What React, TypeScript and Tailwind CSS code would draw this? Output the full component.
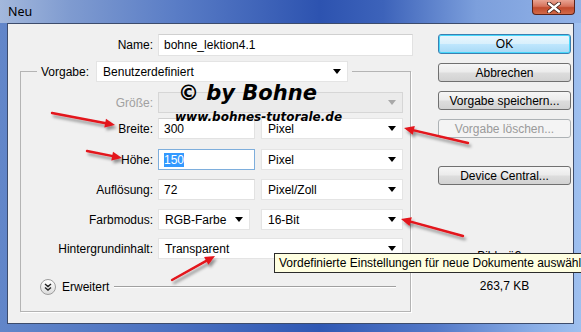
import React from "react";

function Arrow({ x1, y1, x2, y2 }: { x1: number; y1: number; x2: number; y2: number }) {
  const a = Math.atan2(y2 - y1, x2 - x1);
  const len = 11;
  const spread = 0.42;
  const p1 = [x2 - len * Math.cos(a - spread), y2 - len * Math.sin(a - spread)];
  const p2 = [x2 - len * Math.cos(a + spread), y2 - len * Math.sin(a + spread)];
  const bx = x2 - (len - 3) * Math.cos(a);
  const by = y2 - (len - 3) * Math.sin(a);
  return (
    <g filter="url(#shadow)">
      <line x1={x1} y1={y1} x2={bx} y2={by} stroke="#e3141b" strokeWidth={2.4} strokeLinecap="round" />
      <polygon points={`${x2},${y2} ${p1[0]},${p1[1]} ${p2[0]},${p2[1]}`} fill="#e3141b" />
    </g>
  );
}

function Caret({ disabled }: { disabled?: boolean }) {
  return (
    <svg width="8" height="5" viewBox="0 0 8 5" className="ml-auto mr-[6px]">
      <polygon points="0,0 8,0 4,5" fill={disabled ? "#a8a8a8" : "#000"} />
    </svg>
  );
}

function Select({ value, className, disabled }: { value: string; className: string; disabled?: boolean }) {
  return (
    <div
      className={`flex items-center h-[21px] pl-[6px] border ${
        disabled ? "bg-[#ebebeb] border-[#d6d6d6]" : "bg-white border-[#e4e4e4]"
      } ${className}`}>
      <span>{value}</span>
      <Caret disabled={disabled} />
    </div>
  );
}

function Input({ value, className, focused }: { value: React.ReactNode; className: string; focused?: boolean }) {
  return (
    <div
      className={`flex items-center h-[21px] pl-[5px] border ${
        focused ? "border-[#7eaedc]" : "border-[#e2e2e2] border-t-[#d0d0d0]"
      } bg-white ${className}`}>
      {value}
    </div>
  );
}

function Button({ label, primary, disabled, className = "" }: { label: string; primary?: boolean; disabled?: boolean; className?: string }) {
  let look = "border-[#707070] bg-[linear-gradient(to_bottom,#f6f6f6_0%,#ebebeb_48%,#dddddd_52%,#d2d2d2_100%)] text-black";
  if (primary) look = "border-[#3c7fb1] bg-[linear-gradient(to_bottom,#eaf6fd_0%,#d9f0fc_48%,#bee6fd_52%,#a7d9f5_100%)] text-black shadow-[inset_0_0_0_1px_#48d8fb]";
  if (disabled) look = "border-[#adb2b5] bg-[#f4f4f4] text-[#9a9a9a]";
  return (
    <div className={`w-[133px] flex items-center justify-center border rounded-[3px] ${look} ${className}`}>
      {label}
    </div>
  );
}

function Row({ label, children, className = "", muted }: { label: string; children: React.ReactNode; className?: string; muted?: boolean }) {
  return (
    <div className={`flex items-center h-[21px] ${className}`}>
      <span className={`w-[132px] text-right ${muted ? "text-[#a0a0a0]" : ""}`}>{label}</span>
      <div className="flex ml-[5px] gap-[6px]">{children}</div>
    </div>
  );
}

export default function App() {
  return (
    <div className="relative w-[581px] h-[332px] overflow-hidden font-['Liberation_Sans',Arial,sans-serif] text-[12px] text-black bg-[linear-gradient(to_right,#6286c9_0%,#4a70c0_30%,#2f58b4_55%,#5479c8_75%,#8aaee6_92%,#9fc0ef_100%)]">
      {/* title bar */}
      <div className="relative h-[23px] flex items-start bg-[linear-gradient(to_right,#a3b8dc_0%,#7f9bd0_12%,#5a7dc6_30%,#2d53b0_55%,#3d63ba_66%,#7c9fdc_82%,#92b3e8_100%)]">
        <span className="ml-[8px] mt-[3px] text-[12.5px] font-['Noto_Sans',sans-serif]">Neu</span>
        <div className="ml-auto mr-[6px] w-[43px] h-[15px] rounded-b-[4px] border border-t-0 border-[#5b231a] flex items-center justify-center bg-[linear-gradient(to_bottom,#e9a493_0%,#d6735c_45%,#c14a2d_55%,#d26a48_100%)]">
          <svg width="14" height="11" viewBox="0 0 14 11">
            <path d="M2 1.5 L12 9.5 M12 1.5 L2 9.5" stroke="#3a1a14" strokeWidth={4} strokeLinecap="round" />
            <path d="M2 1.5 L12 9.5 M12 1.5 L2 9.5" stroke="#fff" strokeWidth={2.4} strokeLinecap="round" />
          </svg>
        </div>
      </div>

      {/* client area */}
      <div className="ml-[7px] w-[567px] h-[301px] border border-[#3d4c6c] bg-[#f0f0f0] flex">
        <div className="w-[411px] pt-[10px]">
          <div className="flex items-center h-[22px]">
            <span className="w-[145px] text-right">Name:</span>
            <Input value="bohne_lektion4.1" className="ml-[5px] w-[255px] h-[22px]" />
          </div>

          <fieldset className="ml-[12px] mt-[5px] w-[391px] border border-[#b4b4b4] shadow-[1px_1px_0_#fff] pb-[16px]">
            <legend className="ml-[16px] px-[4px] flex items-center">
              <span>Vorgabe:</span>
              <Select value="Benutzerdefiniert" className="ml-[7px] w-[252px] h-[20px]" />
            </legend>

            <Row label="Größe:" muted className="mt-[10px]">
              <Select value="" disabled className="w-[245px]" />
            </Row>
            <Row label="Breite:" className="mt-[5px]">
              <Input value="300" className="w-[97px]" />
              <Select value="Pixel" className="w-[142px]" />
            </Row>
            <Row label="Höhe:" className="mt-[10px]">
              <Input
                focused
                value={<span className="bg-[#3399ff] text-white leading-[14px]">150</span>}
                className="w-[97px]"
              />
              <Select value="Pixel" className="w-[142px]" />
            </Row>
            <Row label="Auflösung:" className="mt-[9px]">
              <Input value="72" className="w-[97px]" />
              <Select value="Pixel/Zoll" className="w-[142px]" />
            </Row>
            <Row label="Farbmodus:" className="mt-[9px]">
              <Select value="RGB-Farbe" className="w-[92px]" />
              <Select value="16-Bit" className="ml-[5px] w-[142px]" />
            </Row>
            <Row label="Hintergrundinhalt:" className="mt-[8px]">
              <Select value="Transparent" className="w-[245px]" />
            </Row>

            <div className="flex items-center h-[16px] mt-[20px] ml-[19px]">
              <div className="w-[16px] h-[16px] rounded-full border border-[#9c9c9c] bg-[linear-gradient(to_bottom,#ffffff,#dcdcdc)] flex items-center justify-center">
                <svg width="8" height="8" viewBox="0 0 8 8">
                  <path d="M1 1 L4 3.5 L7 1 M1 4.5 L4 7 L7 4.5" stroke="#222" strokeWidth={1.4} fill="none" />
                </svg>
              </div>
              <span className="ml-[6px]">Erweitert</span>
              <div className="ml-[5px] w-[282px] h-[2px] border-t border-[#a0a0a0] border-b-white border-b" />
            </div>
          </fieldset>
        </div>

        <div className="ml-[19px] pt-[10px] flex flex-col">
          <Button label="OK" primary className="h-[20px]" />
          <Button label="Abbrechen" className="h-[19px] mt-[9px]" />
          <Button label="Vorgabe speichern..." className="h-[19px] mt-[9px]" />
          <Button label="Vorgabe löschen..." disabled className="h-[19px] mt-[9px]" />
          <Button label="Device Central..." className="h-[19px] mt-[28px]" />
          <div className="mt-[62px] text-center">Bildgröße:</div>
          <div className="mt-[12px] text-center">263,7 KB</div>
        </div>
      </div>

      {/* watermark */}
      <div className="absolute left-[178px] top-[80px] font-['DejaVu_Sans',sans-serif] font-bold italic text-[21px] leading-[26px] pointer-events-none">
        © by Bohne
      </div>
      <div className="absolute left-[175px] top-[109px] font-['DejaVu_Sans',sans-serif] font-bold italic text-[12px] leading-[16px] pointer-events-none">
        www.bohnes-tutorale.de
      </div>

      {/* tooltip */}
      <div className="absolute left-[274px] top-[253px] h-[20px] pl-[4px] pr-[6px] flex items-center whitespace-nowrap bg-[#ffffe1] border border-[#2b2b2b]">
        Vordefinierte Einstellungen für neue Dokumente auswählen
      </div>

      {/* red arrows */}
      <svg className="absolute left-0 top-0 pointer-events-none" width="581" height="332">
        <defs>
          <filter id="shadow" x="-20%" y="-50%" width="140%" height="200%">
            <feDropShadow dx="2" dy="3" stdDeviation="1.6" floodColor="#000" floodOpacity="0.4" />
          </filter>
        </defs>
        <Arrow x1={52} y1={113} x2={115} y2={125} />
        <Arrow x1={468} y1={143} x2={404} y2={128} />
        <Arrow x1={87} y1={151} x2={122} y2={158} />
        <Arrow x1={463} y1={236} x2={401} y2={219} />
        <Arrow x1={172} y1={280} x2={215} y2={256} />
      </svg>
    </div>
  );
}
